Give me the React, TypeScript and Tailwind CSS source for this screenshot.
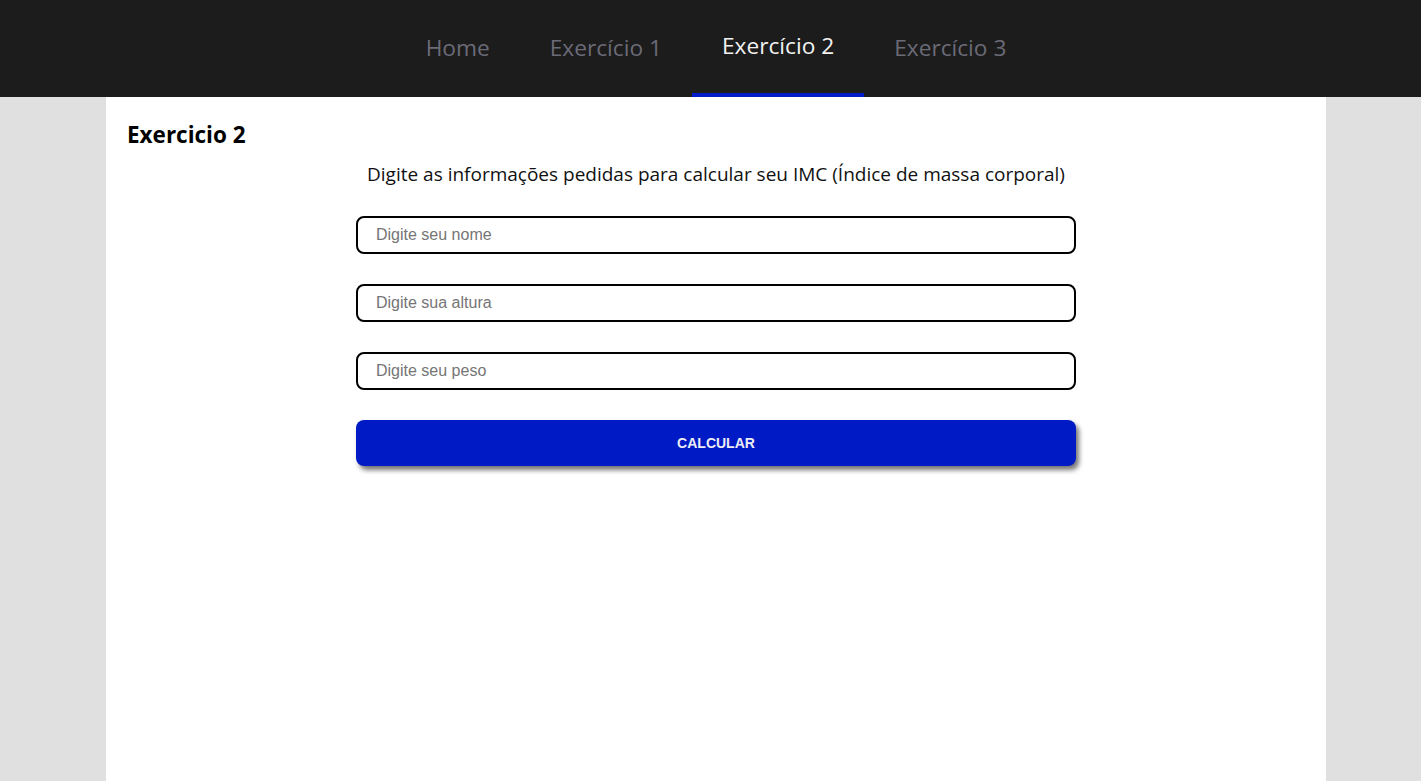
import { useState } from 'react';

const links = ['Home', 'Exercício 1', 'Exercício 2', 'Exercício 3'];

export default function App() {
    const [active, setActive] = useState('Exercício 2');
    const [nome, setNome] = useState('');
    const [altura, setAltura] = useState('');
    const [peso, setPeso] = useState('');

    return (
        <div className="min-h-[781px] bg-[#e0e0e0] flex flex-col font-['Open_Sans',sans-serif]">
            <header className="h-[97px] bg-[#1c1c1c] flex justify-center pl-[11px]">
                <nav className="flex">
                    {links.map((label) => {
                        const isActive = label === active;
                        return (
                            <button
                                key={label}
                                onClick={() => setActive(label)}
                                className={`px-[30px] h-full flex items-center border-b-4 text-[22.7px] ${isActive ? 'border-[#0019c9] text-[#f2f2f2] pt-0' : 'border-transparent text-[#6b6b77] pt-[4px]'}`}
                            >
                                {label}
                            </button>
                        );
                    })}
                </nav>
            </header>

            <main className="w-[1220px] ml-[106px] flex-1 bg-white px-[21px] pt-[22px]">
                <h1 className="text-[22.5px] font-bold text-black leading-[32px]">Exercicio 2</h1>
                <p className="text-center text-[19px] text-[#111] mt-[10px] leading-[26px]">
                    Digite as informações pedidas para calcular seu IMC (Índice de massa corporal)
                </p>

                <form className="w-[720px] mx-auto mt-[29px] flex flex-col gap-[30px] font-['Liberation_Sans',Arial,sans-serif]" onSubmit={(e) => e.preventDefault()}>
                    <input value={nome} onChange={(e) => setNome(e.target.value)} placeholder="Digite seu nome" className="h-[38px] border-2 border-black rounded-[8px] px-[18px] text-[16px] placeholder:text-[#757575] outline-none" />
                    <input value={altura} onChange={(e) => setAltura(e.target.value)} placeholder="Digite sua altura" className="h-[38px] border-2 border-black rounded-[8px] px-[18px] text-[16px] placeholder:text-[#757575] outline-none" />
                    <input value={peso} onChange={(e) => setPeso(e.target.value)} placeholder="Digite seu peso" className="h-[38px] border-2 border-black rounded-[8px] px-[18px] text-[16px] placeholder:text-[#757575] outline-none" />
                    <button type="submit" className="h-[46px] bg-[#001bc6] rounded-[8px] text-[#ececf4] text-[14px] font-bold shadow-[3px_4px_5px_rgba(0,0,0,0.55)]">
                        CALCULAR
                    </button>
                </form>
            </main>
        </div>
    );
}
